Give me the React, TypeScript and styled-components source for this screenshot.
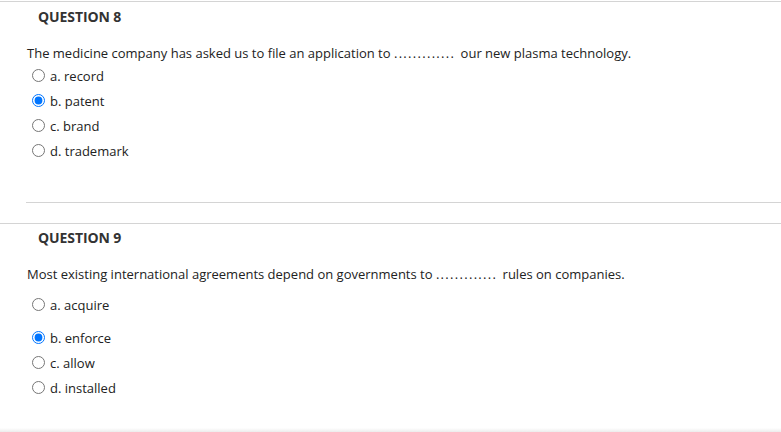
import React from "react";
import styled, { createGlobalStyle } from "styled-components";

const Global = createGlobalStyle`
  html, body { margin: 0; padding: 0; background: #fff; }
  body { font-family: "Open Sans", "Liberation Sans", sans-serif; color: #222; }
`;

const Page = styled.div`
  width: 781px;
  height: 432px;
  overflow: hidden;
  padding-top: 1px;
  box-sizing: border-box;
  display: flex;
  flex-direction: column;
`;

const Block = styled.section<{ $h: number }>`
  border-top: 1px solid #d4d4d4;
  height: ${(p) => p.$h}px;
  display: flex;
  flex-direction: column;
  flex: none;
`;

const Heading = styled.h3<{ $top: number }>`
  margin: ${(p) => p.$top}px 0 0 38px;
  font-size: 14px;
  line-height: 20px;
  font-weight: 700;
  color: #333;
  letter-spacing: -0.1px;
`;

const Prompt = styled.p`
  margin: 17px 0 0 27px;
  font-size: 13px;
  line-height: 18px;
`;

const Blank = styled.span`
  letter-spacing: 1.3px;
  margin-right: 2px;
`;

const Options = styled.div<{ $top: number }>`
  margin: ${(p) => p.$top}px 0 0 27px;
  display: flex;
  flex-direction: column;
`;

const Option = styled.label<{ $extra?: number }>`
  display: flex;
  align-items: center;
  height: 25px;
  margin-top: ${(p) => p.$extra ?? 0}px;
  font-size: 13px;
  gap: 2px;
`;

const Radio = styled.input.attrs({ type: "radio" })`
  width: 13px;
  height: 13px;
  margin: 0 3px 0 5px;
`;

const Divider = styled.hr`
  margin: auto 0 20px 26px;
  border: 0;
  border-top: 1px solid #d4d4d4;
`;

const Shade = styled.div`
  margin-top: auto;
  height: 5px;
  background: linear-gradient(#ffffff, #ececec);
`;

type Q = {
  num: number;
  before: string;
  after: string;
  headTop: number;
  opts: { label: string; checked?: boolean; extra?: number }[];
  gap: number;
};

const questions: Q[] = [
  {
    num: 8,
    before: "The medicine company has asked us to file an application to ",
    after: " our new plasma technology.",
    headTop: 5,
    gap: 1,
    opts: [
      { label: "a. record" },
      { label: "b. patent", checked: true },
      { label: "c. brand" },
      { label: "d. trademark" },
    ],
  },
  {
    num: 9,
    before: "Most existing international agreements depend on governments to ",
    after: " rules on companies.",
    headTop: 4,
    gap: 9,
    opts: [
      { label: "a. acquire" },
      { label: "b. enforce", checked: true, extra: 8 },
      { label: "c. allow" },
      { label: "d. installed" },
    ],
  },
];

export default function App() {
  return (
    <Page>
      <Global />
      {questions.map((q, i) => (
        <Block key={q.num} $h={i === 0 ? 221 : 204}>
          <Heading $top={q.headTop}>QUESTION {q.num}</Heading>
          <Prompt>
            {q.before}
            <Blank>.............</Blank>
            {q.after}
          </Prompt>
          <Options $top={q.gap}>
            {q.opts.map((o) => (
              <Option key={o.label} $extra={o.extra}>
                <Radio name={`q${q.num}`} defaultChecked={o.checked} />
                {o.label}
              </Option>
            ))}
          </Options>
          {i === 0 && <Divider />}
        </Block>
      ))}
      <Shade />
    </Page>
  );
}
